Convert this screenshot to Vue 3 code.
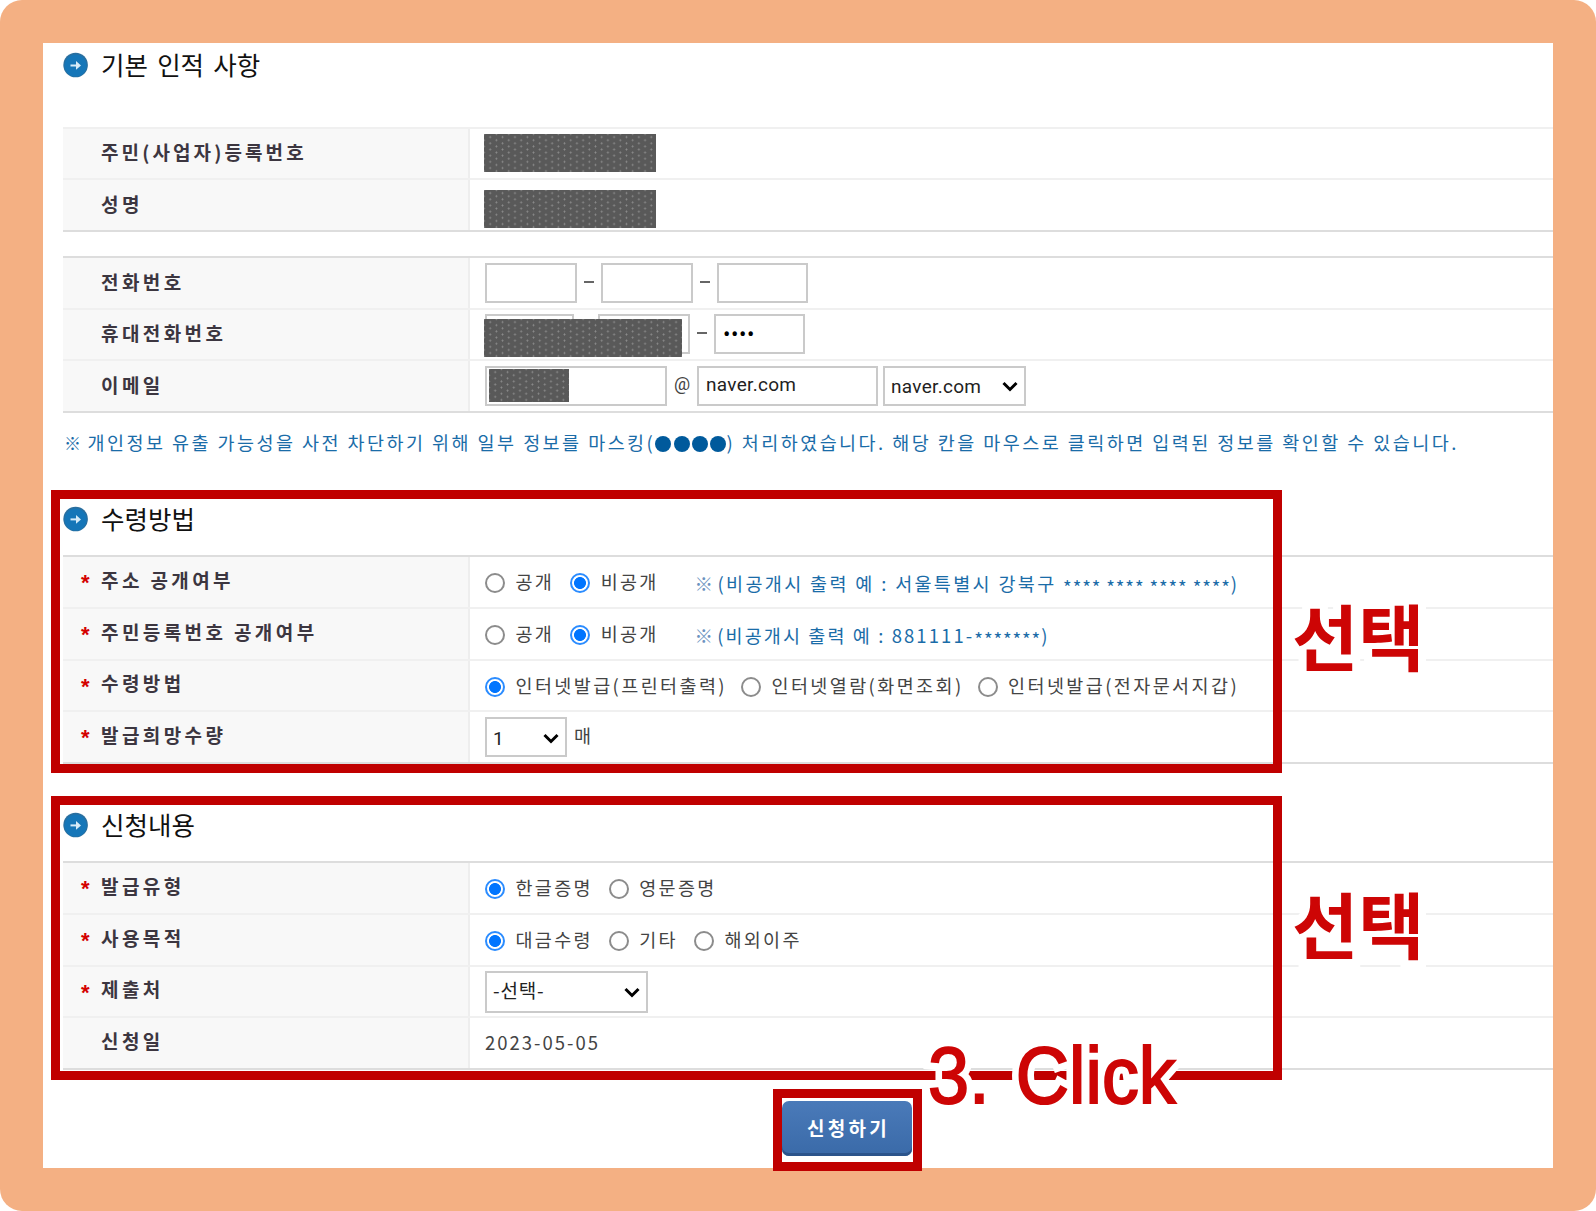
<template>
  <div class="frame">
    <main class="page">
      <section class="section basic">
        <h2 class="title"><ArrowIcon /><span>기본 인적 사항</span></h2>
        <div class="table light-top">
          <div class="row short">
            <div class="label id-label">주민(사업자)등록번호</div>
            <div class="cell"><span class="mask mask-id"></span></div>
          </div>
          <div class="row">
            <div class="label">성명</div>
            <div class="cell"><span class="mask mask-name"></span></div>
          </div>
        </div>
        <div class="table contact">
          <div class="row">
            <div class="label">전화번호</div>
            <div class="cell">
              <input class="tel" type="text" />
              <span class="dash"></span>
              <input class="tel" type="text" />
              <span class="dash"></span>
              <input class="tel last" type="text" />
            </div>
          </div>
          <div class="row short">
            <div class="label">휴대전화번호</div>
            <div class="cell mobile">
              <input class="tel first" type="text" />
              <span class="dash"></span>
              <input class="tel" type="text" />
              <span class="dash"></span>
              <input class="tel last" type="password" v-model="mobileLast" />
              <span class="mask mask-mobile"></span>
            </div>
          </div>
          <div class="row">
            <div class="label">이메일</div>
            <div class="cell email">
              <div class="email-id"><span class="mask mask-email"></span></div>
              <span class="at">@</span>
              <input class="domain" type="text" v-model="domain" />
              <div class="select select-domain">naver.com<ChevronIcon /></div>
            </div>
          </div>
        </div>
        <p class="notice">
          <span class="mark">※</span> 개인정보 유출 가능성을 사전 차단하기 위해 일부 정보를 마스킹(<span class="dots"><i v-for="n in 4" :key="n"></i></span>) 처리하였습니다. 해당 칸을 마우스로 클릭하면 입력된 정보를 확인할 수 있습니다.
        </p>
      </section>

      <section class="section receive">
        <h2 class="title"><ArrowIcon /><span>수령방법</span></h2>
        <div class="table">
          <div v-for="item in disclosure" :key="item.name" class="row">
            <div class="label required">{{ item.label }}</div>
            <div class="cell">
              <label class="radio"><input type="radio" :name="item.name" /><span>공개</span></label>
              <label class="radio"><input type="radio" :name="item.name" checked /><span>비공개</span></label>
              <span class="hint" :class="item.name"><span class="ref">※</span>{{ item.hint }}<span class="stars">{{ item.stars }}</span>)</span>
            </div>
          </div>
          <div class="row short">
            <div class="label required">수령방법</div>
            <div class="cell methods">
              <label v-for="(m, i) in methods" :key="m" class="radio">
                <input type="radio" name="method" :checked="i === 0" /><span>{{ m }}</span>
              </label>
            </div>
          </div>
          <div class="row">
            <div class="label required">발급희망수량</div>
            <div class="cell">
              <div class="select select-count">1<ChevronIcon /></div>
              <span class="unit">매</span>
            </div>
          </div>
        </div>
      </section>

      <section class="section apply">
        <h2 class="title"><ArrowIcon /><span>신청내용</span></h2>
        <div class="table">
          <div v-for="group in groups" :key="group.name" class="row">
            <div class="label required">{{ group.label }}</div>
            <div class="cell">
              <label v-for="(o, i) in group.options" :key="o" class="radio">
                <input type="radio" :name="group.name" :checked="i === 0" /><span>{{ o }}</span>
              </label>
            </div>
          </div>
          <div class="row short">
            <div class="label required">제출처</div>
            <div class="cell">
              <div class="select select-target"><span>-선택-</span><ChevronIcon /></div>
            </div>
          </div>
          <div class="row">
            <div class="label">신청일</div>
            <div class="cell date">2023-05-05</div>
          </div>
        </div>
      </section>

      <div class="actions">
        <button class="submit" type="button">신청하기</button>
      </div>
    </main>

    <!-- guide marks over the form -->
    <div class="guide guide-receive"></div>
    <div class="guide guide-apply"></div>
    <div class="guide guide-submit"></div>
    <strong class="callout callout-receive" data-text="선택">선택</strong>
    <strong class="callout callout-apply" data-text="선택">선택</strong>
    <span class="callout callout-click" data-text="3. Click">3. Click</span>
  </div>
</template>

<script setup>
import { h, ref } from 'vue'

const mobileLast = ref('0000')
const domain = ref('naver.com')

const disclosure = [
  { name: 'addr', label: '주소 공개여부', hint: '(비공개시 출력 예 : 서울특별시 강북구 ', stars: '**** **** **** ****' },
  { name: 'rrn', label: '주민등록번호 공개여부', hint: '(비공개시 출력 예 : 881111-', stars: '*******' },
]

const methods = ['인터넷발급(프린터출력)', '인터넷열람(화면조회)', '인터넷발급(전자문서지갑)']

const groups = [
  { name: 'type', label: '발급유형', options: ['한글증명', '영문증명'] },
  { name: 'purpose', label: '사용목적', options: ['대금수령', '기타', '해외이주'] },
]

const ArrowIcon = () =>
  h('svg', { width: 26, height: 26, viewBox: '0 0 26 26' }, [
    h('circle', { cx: 12.6, cy: 13, r: 12.3, fill: '#2a6f9f' }),
    h('circle', { cx: 12.6, cy: 13.6, r: 11, fill: '#1576b8' }),
    h('path', { d: 'M7.5 13.4h8', fill: 'none', stroke: '#d6ebf8', 'stroke-width': 2 }),
    h('path', { d: 'M13 9l5 4.4-5 4.4z', fill: '#d6ebf8' }),
  ])

const ChevronIcon = () =>
  h('svg', { width: 16, height: 11, viewBox: '0 0 16 11' }, [
    h('path', { d: 'M1.5 2l6.5 6.5L14.5 2', fill: 'none', stroke: '#000', 'stroke-width': 3 }),
  ])
</script>

<style>
body {
  margin: 0;
  background: #fff;
}
</style>

<style scoped>
.frame {
  position: relative;
  box-sizing: border-box;
  width: 1596px;
  height: 1211px;
  padding: 43px;
  border-radius: 22px;
  background: #f4b083;
  font-family: 'Noto Sans CJK KR', sans-serif;
  color: #444;
  overflow: hidden;
}

.page {
  box-sizing: border-box;
  height: 1125px;
  padding-left: 20px;
  background: #fff;
  overflow: hidden;
}

.title {
  display: flex;
  align-items: center;
  gap: 12px;
  height: 44px;
  margin: 0;
  font-size: 25.5px;
  font-weight: 400;
  line-height: 40px;
  color: #111;
  word-spacing: 3.5px;
}

.title span {
  padding-bottom: 2px;
}

.table {
  border-top: 2px solid #ddd;
  border-bottom: 2px solid #ddd;
}

.light-top {
  margin-top: 40px;
  border-top-color: #f0f0f0;
}

.contact {
  margin-top: 24px;
}

.receive {
  margin-top: 37px;
}

.receive .title,
.apply .title {
  height: 58px;
  padding-bottom: 15px;
  box-sizing: border-box;
}

.row {
  display: flex;
  box-sizing: border-box;
  height: 52px;
  border-bottom: 2px solid #f0f0f0;
}

.row.short {
  height: 51px;
}

.row:last-child {
  height: 50px;
  border-bottom: 0;
}

.label {
  position: relative;
  flex: none;
  display: flex;
  align-items: center;
  box-sizing: border-box;
  width: 407px;
  padding: 0 0 4px 38px;
  border-right: 2px solid #eee;
  background: #f8f8f8;
  font-size: 19px;
  font-weight: 700;
  letter-spacing: 3.4px;
  color: #3c3640;
}

.id-label {
  letter-spacing: 3.1px;
}

.receive .label,
.apply .label {
  padding-bottom: 6px;
}

.required::before {
  content: '*';
  position: absolute;
  left: 18px;
  top: 12px;
  font-family: 'Liberation Sans', sans-serif;
  font-size: 22px;
  line-height: 28px;
  letter-spacing: 0;
  color: #d40000;
}

.cell {
  position: relative;
  display: flex;
  align-items: center;
  flex: 1;
  padding-left: 15px;
  font-size: 18.5px;
  letter-spacing: 2.3px;
}

.mask {
  flex: none;
  height: 38px;
  margin-left: -1px;
  background-color: #595959;
  background-image: radial-gradient(circle, #8c8c8c 0.75px, transparent 1.15px),
    radial-gradient(circle, #8c8c8c 0.75px, transparent 1.15px);
  background-size: 12.4px 6.2px;
  background-position: 0 0, 6.2px 3.1px;
}

.mask-id,
.mask-name {
  width: 172px;
}

.mask-id {
  margin-bottom: 1px;
}

.mask-name {
  margin-top: 8px;
}

.mask-mobile {
  position: absolute;
  left: 15px;
  top: 9px;
  width: 198px;
}

.mask-email {
  width: 80px;
  height: 33px;
  margin-left: 2px;
}

.tel,
.domain,
.email-id,
.select {
  box-sizing: border-box;
  height: 40px;
  margin: 0;
  padding: 0 8px;
  border: 2px solid #cacaca;
  border-radius: 0;
  background: #fff;
  font-family: Roboto, sans-serif;
  font-size: 19px;
  color: #222;
}

.tel {
  width: 92px;
}

.tel.first {
  width: 89px;
}

.tel.last {
  width: 91px;
}

.tel[type='password'] {
  padding-left: 7px;
  font-size: 22px;
  letter-spacing: 0.6px;
  color: #000;
}

.dash {
  width: 10px;
  height: 2px;
  margin: 0 7px 2px;
  background: #666;
}

.mobile,
.email {
  padding-bottom: 1px;
}

.email-id {
  display: flex;
  align-items: center;
  width: 182px;
  padding: 0;
}

.at {
  width: 30px;
  padding-bottom: 4px;
  font-family: Roboto, sans-serif;
  font-size: 18px;
  letter-spacing: 0;
  text-align: center;
}

.domain {
  width: 181px;
  padding: 0 7px 3px;
  letter-spacing: 0.3px;
}

.select {
  display: flex;
  align-items: center;
  justify-content: space-between;
  padding: 2px 6px 0;
  letter-spacing: 0.3px;
}

.select-domain {
  width: 143px;
  margin-left: 5px;
}

.select-count {
  width: 82px;
}

.select-target {
  width: 163px;
  height: 42px;
  font-family: 'Noto Sans CJK KR', sans-serif;
  letter-spacing: 0.8px;
}

.select-target span {
  padding-bottom: 6px;
}

.notice {
  margin: 12px 0 0 1px;
  font-size: 18.5px;
  line-height: 34px;
  letter-spacing: 2.45px;
  color: #1a6ca8;
  white-space: nowrap;
}

.mark {
  font-size: 17px;
  letter-spacing: 0;
}

.dots {
  display: inline-flex;
  gap: 2.4px;
  vertical-align: -2px;
}

.dots i {
  width: 16px;
  height: 16px;
  border-radius: 50%;
  background: #005a9c;
}

.radio {
  display: flex;
  align-items: center;
  margin-right: 16px;
  white-space: nowrap;
}

.radio span {
  padding-bottom: 2px;
}

.radio input {
  appearance: none;
  box-sizing: border-box;
  width: 20px;
  height: 20px;
  margin: 2px 10.5px 0 0;
  border: 2px solid #8c8c8c;
  border-radius: 50%;
  background: #fff;
}

.radio input:checked {
  border-color: #2b8cff;
  background: radial-gradient(circle, #0075ff 5.6px, #fff 6.3px);
}

.methods {
  letter-spacing: 2.4px;
}

.methods .radio {
  margin-right: 14px;
}

.hint {
  margin: 2px 0 0 20px;
  letter-spacing: 2.35px;
  color: #1a6ca8;
  white-space: nowrap;
}

.hint.rrn {
  letter-spacing: 2.1px;
}

.ref {
  margin-right: 2px;
  color: #6d93c0;
}

.stars {
  letter-spacing: 0.9px;
  vertical-align: -4px;
  line-height: 1;
}

.unit {
  margin-left: 7px;
  padding-bottom: 4px;
}

.apply {
  margin-top: 39px;
}

.date {
  padding-bottom: 3px;
  letter-spacing: 2px;
}

.actions {
  display: flex;
  margin: 31px 0 0 719px;
}

.submit {
  width: 130px;
  height: 55px;
  padding: 0 0 2px 3px;
  border: 0;
  border-radius: 7px;
  background: linear-gradient(#4a7ab9, #3a6aa8);
  box-shadow: inset 0 -3px 0 #2b548b;
  font-family: 'Noto Sans CJK KR', sans-serif;
  font-size: 19px;
  font-weight: 700;
  letter-spacing: 3.3px;
  color: #fff;
}

.guide {
  position: absolute;
  box-sizing: border-box;
  border: 9px solid #c00000;
}

.guide-receive {
  left: 51px;
  top: 490px;
  width: 1231px;
  height: 283px;
}

.guide-apply {
  left: 51px;
  top: 796px;
  width: 1231px;
  height: 284px;
}

.guide-submit {
  left: 773px;
  top: 1089px;
  width: 149px;
  height: 82px;
}

.callout {
  position: absolute;
  isolation: isolate;
  font-size: 72px;
  line-height: 80px;
  color: #cd0505;
  white-space: nowrap;
  transform-origin: 0 50%;
}

/* white halo behind the letters */
.callout::before {
  content: attr(data-text);
  position: absolute;
  left: 0;
  top: 0;
  z-index: -1;
  color: #fff;
  -webkit-text-stroke: 16px #fff;
}

.callout-receive {
  left: 1292px;
  top: 594px;
}

.callout-apply {
  left: 1292px;
  top: 882px;
}

.callout-click {
  left: 928px;
  top: 1036px;
  font-family: 'Liberation Sans', sans-serif;
  font-size: 79px;
  word-spacing: 6px;
  -webkit-text-stroke: 2px #cd0505;
  transform: scaleX(0.935);
}
</style>
